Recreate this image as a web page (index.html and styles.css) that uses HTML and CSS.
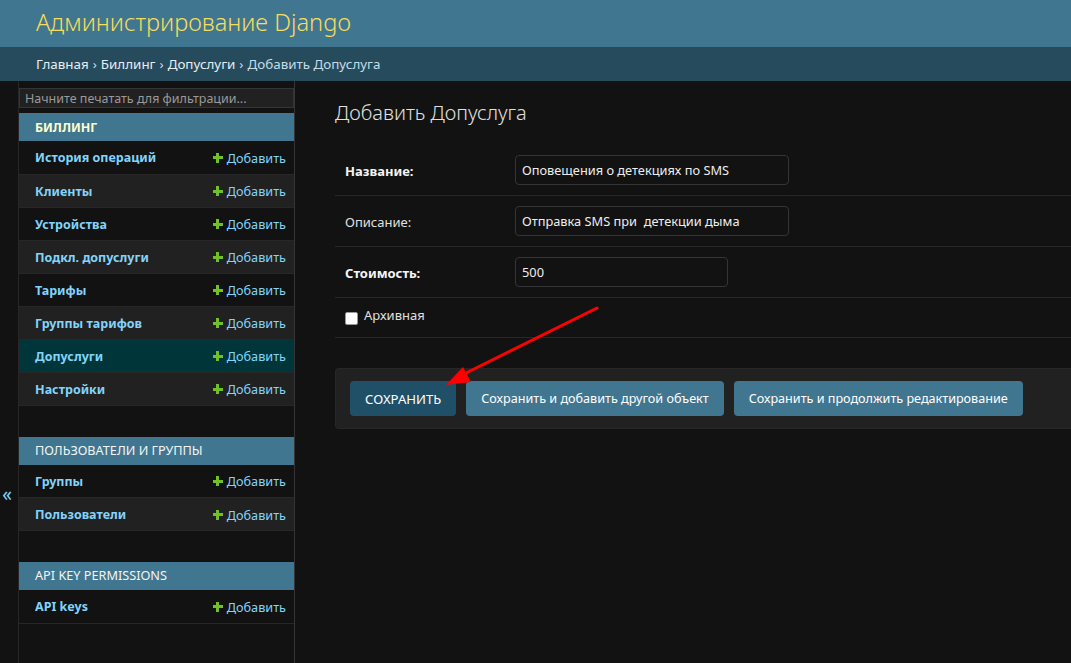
FILE: index.html
```html
<!DOCTYPE html>
<html lang="ru">
<head>
<meta charset="utf-8">
<title>Добавить Допуслуга | Администрирование Django</title>
<link rel="stylesheet" href="styles.css">
</head>
<body>
<header class="header">
  <h1 class="branding">Администрирование Django</h1>
</header>
<nav class="breadcrumbs">
  <a href="#">Главная</a><span class="sep">›</span><a href="#">Биллинг</a><span class="sep">›</span><a href="#">Допуслуги</a><span class="sep">›</span><span>Добавить Допуслуга</span>
</nav>
<div class="main">
  <button class="toggle" type="button">«</button>
  <aside class="sidebar">
    <input class="nav-filter" type="search" placeholder="Начните печатать для фильтрации...">
    <table class="module">
      <caption class="current-app">Биллинг</caption>
      <tr><th>История операций</th><td><span class="add"><span class="plus"></span>Добавить</span></td></tr>
      <tr class="alt"><th>Клиенты</th><td><span class="add"><span class="plus"></span>Добавить</span></td></tr>
      <tr><th>Устройства</th><td><span class="add"><span class="plus"></span>Добавить</span></td></tr>
      <tr class="alt"><th>Подкл. допуслуги</th><td><span class="add"><span class="plus"></span>Добавить</span></td></tr>
      <tr><th>Тарифы</th><td><span class="add"><span class="plus"></span>Добавить</span></td></tr>
      <tr class="alt"><th>Группы тарифов</th><td><span class="add"><span class="plus"></span>Добавить</span></td></tr>
      <tr class="selected"><th>Допуслуги</th><td><span class="add"><span class="plus"></span>Добавить</span></td></tr>
      <tr class="alt"><th>Настройки</th><td><span class="add"><span class="plus"></span>Добавить</span></td></tr>
    </table>
    <table class="module">
      <caption>Пользователи и группы</caption>
      <tr><th>Группы</th><td><span class="add"><span class="plus"></span>Добавить</span></td></tr>
      <tr class="alt"><th>Пользователи</th><td><span class="add"><span class="plus"></span>Добавить</span></td></tr>
    </table>
    <table class="module">
      <caption>API Key Permissions</caption>
      <tr><th>API keys</th><td><span class="add"><span class="plus"></span>Добавить</span></td></tr>
    </table>
  </aside>
  <main class="content">
    <h1 class="title">Добавить Допуслуга</h1>
    <div class="fieldset">
      <div class="form-row">
        <label class="label required">Название:</label>
        <div class="input wide">Оповещения о детекциях по SMS</div>
      </div>
      <div class="form-row">
        <label class="label">Описание:</label>
        <div class="input wide">Отправка SMS при&nbsp; детекции дыма</div>
      </div>
      <div class="form-row">
        <label class="label required">Стоимость:</label>
        <div class="input short">500</div>
      </div>
      <div class="form-row check-row">
        <span class="checkbox"></span><span class="check-label">Архивная</span>
      </div>
    </div>
    <div class="submit-row">
      <button class="btn default" type="button">СОХРАНИТЬ</button>
      <button class="btn" type="button">Сохранить и добавить другой объект</button>
      <button class="btn" type="button">Сохранить и продолжить редактирование</button>
    </div>
  </main>
</div>
<svg class="arrow" width="1071" height="663" viewBox="0 0 1071 663">
  <line x1="597" y1="308" x2="458" y2="377" stroke="#ff0000" stroke-width="3" stroke-linecap="round"/>
  <polygon points="446,385 463,367 471,382" fill="#ff0000"/>
</svg>
</body>
</html>
```
FILE: styles.css
```css
html, body {
  margin: 0;
  height: 100%;
  overflow: hidden;
}
body {
  background: #121212;
  color: #eeeeee;
  font-family: "Noto Sans", "Open Sans", sans-serif;
  font-size: 13px;
  position: relative;
}
.header {
  height: 47px;
  background: #417690;
  padding: 0 36px;
  display: flex;
  align-items: center;
}
.branding {
  margin: 0 0 2px;
  font-size: 23.6px;
  font-weight: 300;
  color: #f5dd5d;
  line-height: 1;
}
.breadcrumbs {
  height: 34px;
  background: #264b5d;
  padding: 0 36px;
  display: flex;
  align-items: center;
  font-size: 13.4px;
  color: #c4dce8;
}
.breadcrumbs a {
  color: #e6eef2;
  text-decoration: none;
}
.breadcrumbs .sep {
  margin: 0 4px;
}
.main {
  display: flex;
  min-height: 826px;
}
.toggle {
  width: 19px;
  flex: 0 0 19px;
  background: #121212;
  border: 0;
  border-right: 1px solid #272727;
  color: #81d4fa;
  font-size: 19px;
  padding: 0 4px 0 0;
  display: flex;
  align-items: center;
  justify-content: center;
  font-family: "Noto Sans", sans-serif;
}
.sidebar {
  width: 275px;
  flex: 0 0 275px;
  border-right: 1px solid #353535;
}
.nav-filter {
  display: block;
  width: 100%;
  box-sizing: border-box;
  height: 20px;
  margin: 7px 0 5px;
  padding: 0 5px;
  background: #212121;
  border: 1px solid #353535;
  color: #eee;
  font-family: inherit;
  font-size: 12.5px;
}
.nav-filter::placeholder {
  color: #9a9a9a;
}
.module {
  width: 100%;
  border-collapse: collapse;
  margin-bottom: 31px;
}
.module caption {
  background: #417690;
  color: #f4f4f4;
  text-align: left;
  text-transform: uppercase;
  height: 28px;
  line-height: 27px;
  padding: 0 16px;
  font-size: 12.7px;
}
.module caption.current-app {
  color: #ffffcc;
  font-weight: bold;
  font-size: 12.4px;
  line-height: 29px;
}
.module tr {
  height: 33px;
  border-bottom: 1px solid #272727;
  background: #121212;
}
.module tr.alt {
  background: #212121;
}
.module tr.selected {
  background: #00363a;
}
.module th {
  text-align: left;
  padding: 1px 0 0 16px;
  color: #81d4fa;
  font-size: 12.5px;
  font-weight: bold;
  white-space: nowrap;
}
.module td {
  text-align: right;
  padding: 1px 8px 0 0;
  white-space: nowrap;
}
.add {
  color: #81d4fa;
  font-size: 12.7px;
  display: inline-flex;
  align-items: center;
  gap: 4px;
}
.plus {
  width: 10px;
  height: 10px;
  display: inline-block;
  background:
    linear-gradient(#70bf2b, #70bf2b) center / 3px 10px no-repeat,
    linear-gradient(#70bf2b, #70bf2b) center / 10px 3px no-repeat;
}
.content {
  flex: 1;
  padding: 20px 0 20px 40px;
  min-width: 0;
}
.title {
  margin: 0 0 20px;
  font-size: 20px;
  line-height: 24px;
  font-weight: 300;
  color: #e0e0e0;
}
.fieldset {
  margin-bottom: 30px;
}
.form-row {
  display: flex;
  align-items: center;
  padding: 10px;
  border-bottom: 1px solid #272727;
}
.label {
  flex: 0 0 160px;
  margin-right: 10px;
  color: #e0e0e0;
  font-size: 13px;
  padding-top: 1px;
}
.label.required {
  font-weight: bold;
  color: #f5f5f5;
}
.input {
  height: 30px;
  box-sizing: border-box;
  border: 1px solid #353535;
  border-radius: 4px;
  background: #121212;
  padding: 0 6px;
  display: flex;
  align-items: center;
  color: #eeeeee;
  font-size: 12.8px;
  white-space: nowrap;
}
.input.wide {
  width: 274px;
}
.input.short {
  width: 213px;
}
.check-row {
  height: 19px;
  align-items: flex-start;
}
.checkbox {
  width: 11px;
  height: 11px;
  border: 1px solid #999;
  border-radius: 2px;
  background: #fff;
  margin-top: 4px;
  margin-right: 6px;
}
.check-label {
  color: #e0e0e0;
  font-size: 13px;
  line-height: 15px;
}
.submit-row {
  display: flex;
  gap: 10px;
  padding: 12px 14px;
  background: #212121;
  border: 1px solid #272727;
  border-right: 0;
  border-radius: 4px 0 0 4px;
}
.btn {
  height: 35px;
  padding: 0 15px;
  border: 0;
  border-radius: 4px;
  background: #417690;
  color: #ffffff;
  font-family: inherit;
  font-size: 12.62px;
}
.btn.default {
  background: #205067;
  font-size: 13.15px;
}
.arrow {
  position: absolute;
  left: 0;
  top: 0;
  pointer-events: none;
}
```
